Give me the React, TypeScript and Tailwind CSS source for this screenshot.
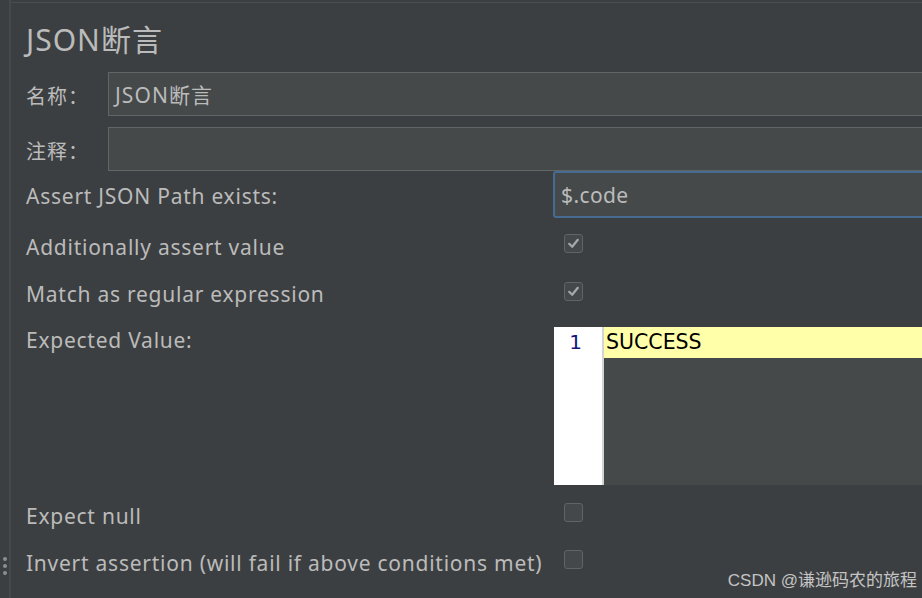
import React from 'react';

const font = { fontFamily: '"Noto Sans", "Noto Sans CJK SC", sans-serif' };

function Check({ checked }: { checked?: boolean }) {
  return (
    <span className="flex h-[19px] w-[19px] items-center justify-center rounded-[3px] border border-[#616466] bg-[#44484a]">
      {checked && (
        <svg width="13" height="13" viewBox="0 0 13 13" fill="none">
          <path d="M2.2 6.8 L5.2 9.8 L10.8 2.8" stroke="#a6a8aa" strokeWidth="2.2" strokeLinecap="round" strokeLinejoin="round" />
        </svg>
      )}
    </span>
  );
}

function CheckRow({ label, checked, h }: { label: string; checked?: boolean; h: string }) {
  return (
    <div className={`flex ${h} items-center`}>
      <span className="w-[538px] shrink-0 pt-[8px] text-[21px] tracking-[0.75px] text-[#bbbbbb]">{label}</span>
      <Check checked={checked} />
    </div>
  );
}

export default function App() {
  return (
    <div className="relative flex h-[598px] w-[922px] overflow-hidden bg-[#3c3f41]" style={font}>
      <div className="flex w-[9px] shrink-0 flex-col items-center gap-[3px] pt-[557px]">
        <span className="h-[4px] w-[4px] rounded-full bg-[#8c8e90]" />
        <span className="h-[4px] w-[4px] rounded-full bg-[#8c8e90]" />
        <span className="h-[4px] w-[4px] rounded-full bg-[#8c8e90]" />
      </div>
      <div className="w-[2px] shrink-0 bg-[#46494b]" />
      <div className="flex min-w-0 flex-1 flex-col">
        <div className="mt-[2px] h-[1px] bg-[#4a4d50]" />
        <div className="flex h-[69px] items-center pl-[15px] pt-[4px] text-[30px] tracking-[1px] text-[#bbbbbb]">JSON断言</div>

        <div className="flex h-[44px] items-center pl-[15px]">
          <span className="w-[82px] shrink-0 pt-[5px] text-[20px] tracking-[1px] text-[#bbbbbb]">名称：</span>
          <div className="flex h-full flex-1 items-center border border-r-0 border-[#626567] bg-[#45494a] pl-[6px] pt-[3px] text-[21px] tracking-[1.1px] text-[#bbbbbb]">
            JSON断言
          </div>
        </div>
        <div className="mt-[11px] flex h-[44px] items-center pl-[15px]">
          <span className="w-[82px] shrink-0 pt-[5px] text-[20px] tracking-[1px] text-[#bbbbbb]">注释：</span>
          <div className="h-full flex-1 border border-r-0 border-[#626567] bg-[#45494a]" />
        </div>

        <div className="flex h-[47px] items-center pl-[15px]">
          <span className="w-[527px] shrink-0 pt-[5px] text-[21px] tracking-[0.75px] text-[#bbbbbb]">Assert JSON Path exists:</span>
          <div className="flex h-full flex-1 items-center rounded-l-[3px] border-2 border-r-0 border-[#466b93] bg-[#45494a] pl-[6px] pt-[3px] text-[21px] tracking-[0.4px] text-[#bbbbbb]">
            $.code
          </div>
        </div>

        <div className="pl-[15px]">
          <CheckRow label="Additionally assert value" checked h="h-[51px]" />
          <CheckRow label="Match as regular expression" checked h="h-[44px]" />
          <div className="flex pt-[14px]">
            <span className="w-[528px] shrink-0 text-[21px] leading-[26px] tracking-[0.75px] text-[#bbbbbb]">Expected Value:</span>
            <div className="flex h-[158px] flex-1 bg-[#45494a]">
              <div className="w-[50px] shrink-0 border-r-2 border-[#d4d4d4] bg-white pr-[20px] text-right text-[20px] leading-[31px] text-[#14147a]" style={{ fontFamily: '"DejaVu Sans", sans-serif' }}>
                1
              </div>
              <div className="h-[31px] flex-1 bg-[#ffffaa] pl-[2px] text-[20.5px] leading-[31px] text-black" style={{ fontFamily: '"DejaVu Sans", sans-serif' }}>
                SUCCESS
              </div>
            </div>
          </div>
          <CheckRow label="Expect null" h="h-[55px]" />
          <CheckRow label="Invert assertion (will fail if above conditions met)" h="h-[39px]" />
        </div>
      </div>
      <div className="absolute bottom-[5px] right-[5px] text-[17px] text-[#c4c4c4]" style={{ fontFamily: '"Liberation Sans", "Noto Sans CJK SC", sans-serif' }}>
        CSDN @谦逊码农的旅程
      </div>
    </div>
  );
}
